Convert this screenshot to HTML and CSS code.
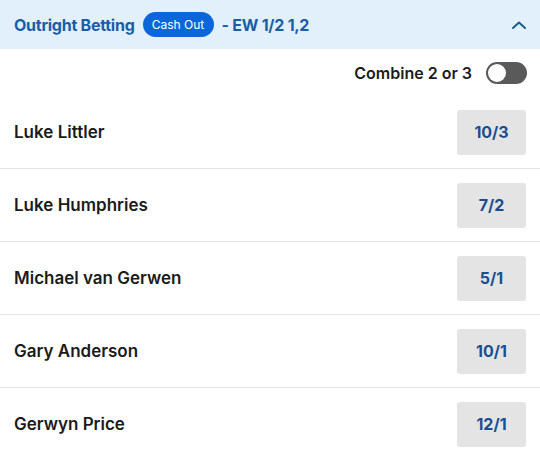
FILE: index.html
```html
<!DOCTYPE html>
<html>
<head>
<meta charset="utf-8">
<link rel="stylesheet" href="styles.css">
</head>
<body>
<div class="market">
  <div class="header">
    <div class="title">
      <span class="title-text">Outright Betting</span>
      <span class="pill">Cash Out</span>
      <span class="title-text">- EW 1/2 1,2</span>
    </div>
    <svg class="chevron" width="16" height="10" viewBox="0 0 16 10"><path d="M2 8 L8 2.5 L14 8" fill="none" stroke="#1c5d8c" stroke-width="2" stroke-linecap="round" stroke-linejoin="round"/></svg>
  </div>
  <div class="combine">
    <span class="combine-label">Combine 2 or 3</span>
    <span class="toggle"><span class="knob"></span></span>
  </div>
  <div class="row"><span class="name">Luke Littler</span><span class="odds">10/3</span></div>
  <div class="row"><span class="name">Luke Humphries</span><span class="odds">7/2</span></div>
  <div class="row"><span class="name">Michael van Gerwen</span><span class="odds">5/1</span></div>
  <div class="row"><span class="name">Gary Anderson</span><span class="odds">10/1</span></div>
  <div class="row"><span class="name">Gerwyn Price</span><span class="odds">12/1</span></div>
</div>
</body>
</html>
```
FILE: styles.css
```css
* { box-sizing: border-box; }
body {
  margin: 0;
  background: #fff;
  font-family: Inter, "Noto Sans", sans-serif;
}
.market { width: 540px; }
.header {
  height: 49px;
  background: #e2f0fc;
  display: flex;
  align-items: center;
  justify-content: space-between;
  padding: 0 13px 0 14px;
}
.title {
  display: flex;
  align-items: center;
  gap: 8px;
}
.title-text {
  font-size: 16px;
  font-weight: 700;
  color: #1a5ea6;
  letter-spacing: -0.25px;
}
.pill {
  background: #0b67d9;
  color: #fff;
  font-size: 12px;
  font-weight: 400;
  height: 25px;
  width: 71px;
  border-radius: 13px;
  display: flex;
  align-items: center;
  justify-content: center;
}
.combine {
  height: 47px;
  display: flex;
  align-items: center;
  justify-content: flex-end;
  gap: 14px;
  padding-right: 13px;
}
.combine-label {
  font-size: 16px;
  font-weight: 600;
  color: #1b1b1b;
}
.toggle {
  width: 41px;
  height: 22px;
  border-radius: 11px;
  background: #5a5a5a;
  display: flex;
  align-items: center;
  padding: 2px;
}
.knob {
  width: 18px;
  height: 18px;
  border-radius: 50%;
  background: #fff;
}
.row {
  height: 73px;
  display: flex;
  align-items: center;
  justify-content: space-between;
  padding: 0 14px 0 14px;
  border-bottom: 1px solid #e4e4e4;
}
.name {
  font-size: 17px;
  font-weight: 600;
  color: #1b1b1b;
}
.odds {
  width: 69px;
  height: 45px;
  background: #e4e4e4;
  border-radius: 3px;
  display: flex;
  align-items: center;
  justify-content: center;
  font-size: 16px;
  font-weight: 700;
  color: #1a4f8f;
}
```
